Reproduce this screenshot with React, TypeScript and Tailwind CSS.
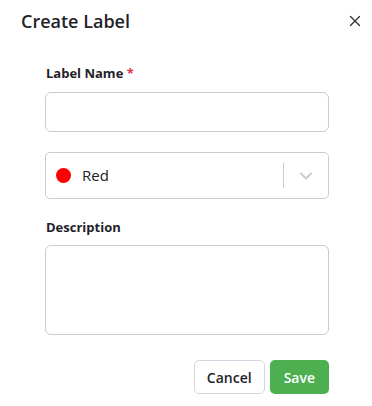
import { X, ChevronDown } from "lucide-react";

export default function App() {
  return (
    <div className="w-[372px] h-[406px] bg-white font-['Open_Sans',sans-serif] text-[#1f2329]">
      {/* header */}
      <div className="flex items-center justify-between pl-[21px] pr-[6px] pt-[5px] h-[36px]">
        <h2 className="text-[18px] font-semibold leading-none">Create Label</h2>
        <button className="w-[22px] h-[22px] flex items-center justify-center text-[#333]">
          <X size={18} strokeWidth={1.8} />
        </button>
      </div>

      <div className="pl-[45px] pr-[43px] pt-[28px]">
        <label className="block text-[13px] font-bold leading-[18px] mb-[10px] pl-px">
          Label Name <span className="text-[#e5304a]">*</span>
        </label>
        <input
          className="block w-full h-[40px] rounded-[6px] border border-[#c6ccd4] px-3 text-[14px] outline-none"
          type="text"
        />

        <div className="mt-[20px] h-[47px] rounded-[5px] border border-[#cccccc] flex items-center">
          <span className="ml-[10px] w-[15px] h-[15px] rounded-full bg-[#ff0000]" />
          <span className="ml-[11px] text-[15px] text-[#222]">Red</span>
          <div className="ml-auto flex items-center h-full">
            <span className="w-px h-[25px] bg-[#cccccc]" />
            <span className="w-[44px] flex items-center justify-center text-[#cccccc]">
              <ChevronDown size={20} strokeWidth={2.5} />
            </span>
          </div>
        </div>

        <label className="block text-[13px] font-bold leading-[18px] mt-[19px] mb-[9px] pl-px">
          Description
        </label>
        <textarea className="block w-full h-[90px] rounded-[6px] border border-[#c6ccd4] px-3 py-2 text-[14px] outline-none resize-none" />

        <div className="flex justify-end gap-[5px] mt-[25px]">
          <button className="h-[34px] px-[12px] rounded-[5px] border border-[#d3d6e0] bg-white text-[14px] font-semibold text-[#1f2329]">
            Cancel
          </button>
          <button className="h-[34px] px-[14px] rounded-[5px] bg-[#4caf50] text-[14px] font-semibold text-white">
            Save
          </button>
        </div>
      </div>
    </div>
  );
}
